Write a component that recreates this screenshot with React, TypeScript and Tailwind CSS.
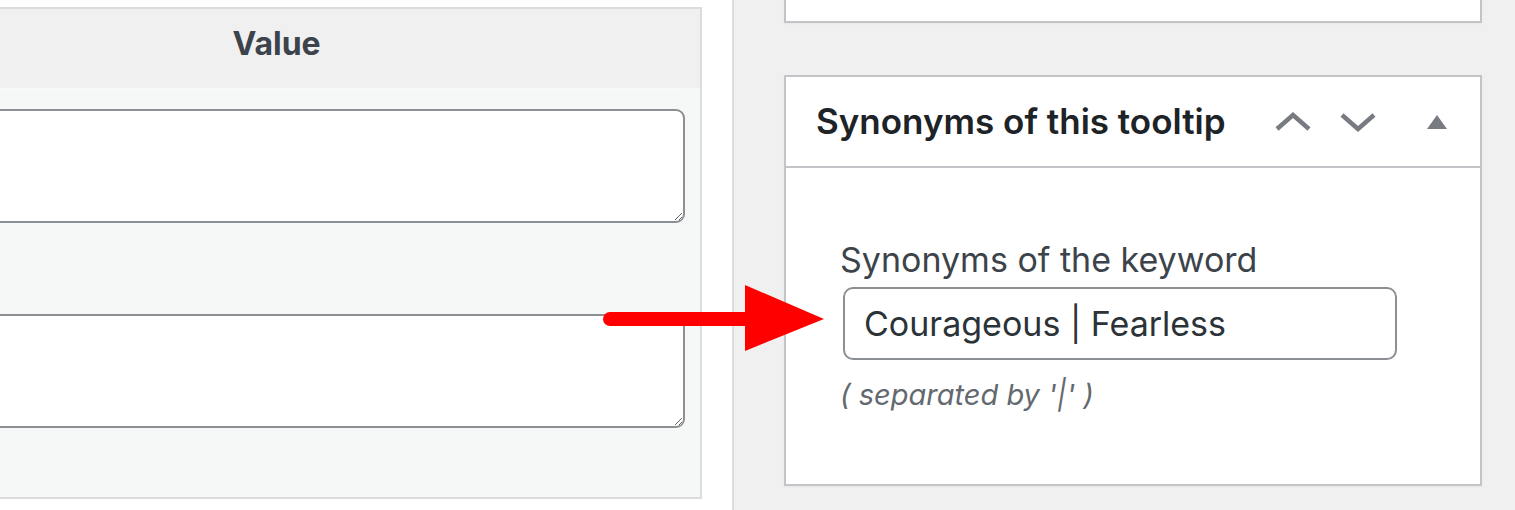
import React from "react";

const font = { fontFamily: "Inter, 'Noto Sans', sans-serif" };

function Chevron({ dir }: { dir: "up" | "down" }) {
  return (
    <svg width="36" height="20" viewBox="0 0 36 20" className="block">
      <polyline
        points={dir === "up" ? "2,17 18,3 34,17" : "2,3 18,17 34,3"}
        fill="none"
        stroke="#787c82"
        strokeWidth="4.5"
      />
    </svg>
  );
}

function ValueTable() {
  return (
    <div className="w-[732px] shrink-0 overflow-hidden bg-white pt-[7px]">
      <div className="-ml-[147px] w-[849px] border-t-2 border-r-2 border-b-2 border-[#dcdcde]">
        {/* header */}
        <div className="flex h-[79px] items-center justify-center bg-[#f0f0f1] pb-[9px]">
          <span className="text-[32px] font-bold text-[#3c434a]">Value</span>
        </div>
        {/* rows */}
        <div className="bg-[#f6f7f7] pr-[15px]">
          <div className="border-t border-[#fafafa] pt-[4px]" />
          <div className="flex flex-col pt-[16px] pb-[69px]">
            <textarea className="h-[114px] w-full rounded-[9px] border-2 border-[#8c8f94] bg-white" />
            <div className="h-[91px]" />
            <textarea className="h-[114px] w-full rounded-[9px] border-2 border-[#8c8f94] bg-white" />
          </div>
        </div>
      </div>
    </div>
  );
}

function SynonymsBox() {
  return (
    <div className="mt-[52px] border-2 border-[#c3c4c7] bg-white shadow-[0_1px_2px_rgba(0,0,0,0.04)]">
      <div className="flex h-[91px] items-center border-b-2 border-[#c3c4c7] pl-[30px] pr-[33px]">
        <h2 className="flex-1 text-[35px] font-semibold text-[#1d2327]">
          Synonyms of this tooltip
        </h2>
        <div className="flex items-center">
          <Chevron dir="up" />
          <div className="ml-[29px]">
            <Chevron dir="down" />
          </div>
          <div className="ml-[51px] h-0 w-0 border-r-[10px] border-b-[14px] border-l-[10px] border-r-transparent border-b-[#787c82] border-l-transparent" />
        </div>
      </div>
      <div className="pt-[72px] pb-[69px] pl-[54px]">
        <label className="block text-[34px] leading-[40px] text-[#3c434a]">
          Synonyms of the keyword
        </label>
        <div className="mt-[7px] ml-[3px] flex h-[73px] w-[554px] items-center rounded-[10px] border-2 border-[#8c8f94] pl-[19px] text-[34px] text-[#2c3338]">
          Courageous | Fearless
        </div>
        <p className="mt-[15px] text-[29px] italic leading-[40px] text-[#646970]">
          ( separated by '|' )
        </p>
      </div>
    </div>
  );
}

export default function App() {
  return (
    <div className="relative flex h-[510px] w-[1515px] overflow-hidden bg-white" style={font}>
      <ValueTable />
      <div className="flex-1 border-l-2 border-[#dcdcde] bg-[#f0f0f1] pl-[50px] pr-[33px]">
        <div className="-mt-[40px] h-[63px] border-2 border-[#c3c4c7] bg-white shadow-[0_1px_2px_rgba(0,0,0,0.04)]" />
        <SynonymsBox />
      </div>

      {/* red annotation arrow */}
      <svg
        className="pointer-events-none absolute top-0 left-0"
        width="1515"
        height="510"
        viewBox="0 0 1515 510"
      >
        <line x1="610" y1="319" x2="760" y2="319" stroke="#fe0000" strokeWidth="14" strokeLinecap="round" />
        <polygon points="745,285 824,319 745,351" fill="#fe0000" />
      </svg>
    </div>
  );
}
